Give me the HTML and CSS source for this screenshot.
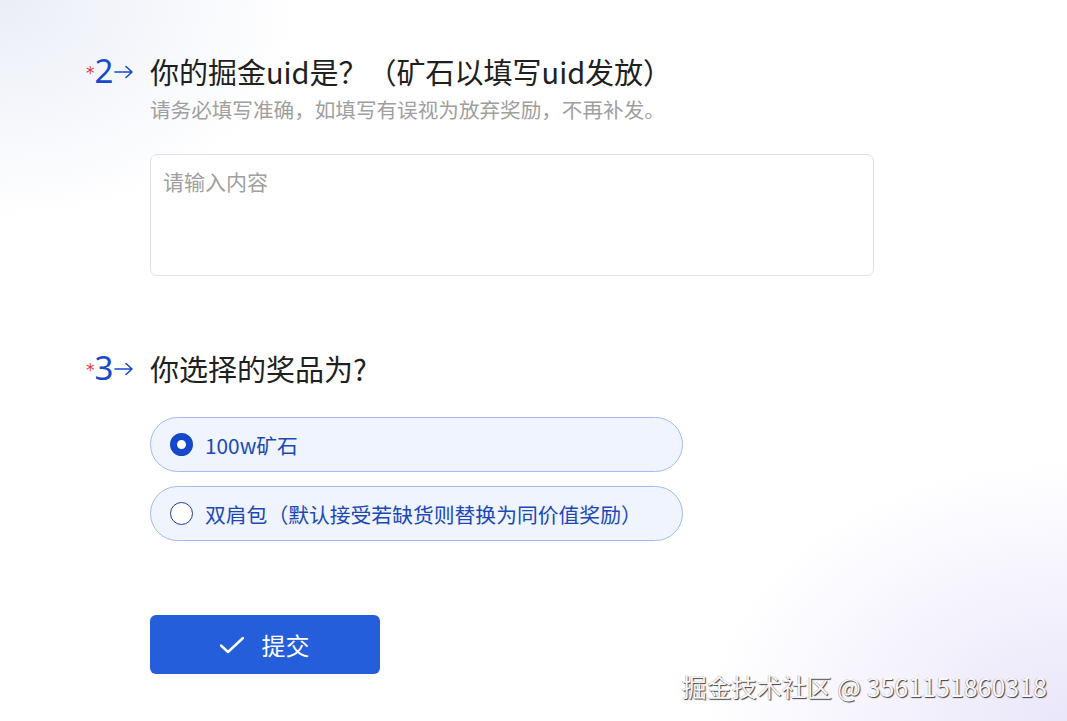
FILE: index.html
```html
<!DOCTYPE html>
<html>
    <head>
        <meta charset="utf-8">
        <title>问卷</title>
        <link rel="stylesheet" href="styles.css">
    </head>
    <body>
      <div class="page">

        <div class="question q2">
          <div class="num"><span class="req">*</span><span class="no">2</span><svg class="arrow" width="20" height="14" viewBox="0 0 20 14"><path d="M1 7 H18 M12 1.5 L18 7 L12 12.5" fill="none" stroke="currentColor" stroke-width="1.6" stroke-linecap="round" stroke-linejoin="round"/></svg></div>
          <div class="body">
            <div class="title">你的掘金uid是？（矿石以填写uid发放）</div>
            <div class="desc">请务必填写准确，如填写有误视为放弃奖励，不再补发。</div>
            <textarea class="answer" placeholder="请输入内容"></textarea>
          </div>
        </div>

        <div class="question q3">
          <div class="num"><span class="req">*</span><span class="no">3</span><svg class="arrow" width="20" height="14" viewBox="0 0 20 14"><path d="M1 7 H18 M12 1.5 L18 7 L12 12.5" fill="none" stroke="currentColor" stroke-width="1.6" stroke-linecap="round" stroke-linejoin="round"/></svg></div>
          <div class="body">
            <div class="title">你选择的奖品为?</div>
            <div class="options">
              <label class="option checked"><span class="radio"></span>100w矿石</label>
              <label class="option"><span class="radio"></span>双肩包（默认接受若缺货则替换为同价值奖励）</label>
            </div>
            <button class="btn">
              <svg width="26" height="20" viewBox="0 0 26 20"><path d="M2 10.5 L9 17 L24 3" fill="none" stroke="white" stroke-width="2.4" stroke-linecap="round" stroke-linejoin="round"/></svg>
              <span>提交</span>
            </button>
          </div>
        </div>

      </div>
      <div class="watermark">掘金技术社区 @ 3561151860318</div>
    </body>
</html>
```

FILE: styles.css
```css
  html, body {
      height: 100%;
  }

  body {
      margin: 0;
      font-family: "Noto Sans CJK SC", "Noto Sans", sans-serif;
      background-color: white;
      background-image:
        radial-gradient(ellipse 300px 220px at 0 0, rgba(232, 236, 246, 0.9), rgba(255, 255, 255, 0)),
        radial-gradient(ellipse 360px 260px at 100% 100%, rgba(234, 230, 250, 1), rgba(255, 255, 255, 0));
      overflow: hidden;
  }

  .page {
      padding-top: 53px;
      padding-left: 86px;
  }

  .question {
      display: flex;
  }

  .q3 {
      margin-top: 74px;
  }

  .num {
      width: 64px;
      height: 36px;
      display: flex;
      align-items: center;
      color: rgb(24, 72, 204);
  }

  .req {
      color: rgb(232, 56, 56);
      font-family: "DejaVu Sans", sans-serif;
      font-size: 17px;
      line-height: 20px;
      position: relative;
      top: 2px;
  }

  .no {
      font-size: 33px;
      line-height: 36px;
      font-family: "Noto Sans", sans-serif;
      letter-spacing: -1px;
  }

  .arrow {
      margin-left: 2px;
      position: relative;
      top: 1px;
  }

  .title {
      font-size: 29px;
      line-height: 36px;
      color: rgb(32, 32, 32);
  }

  .desc {
      font-size: 20.6px;
      line-height: 28px;
      color: rgb(160, 160, 160);
      margin-top: 6px;
  }

  .answer {
      display: block;
      box-sizing: border-box;
      width: 724px;
      height: 122px;
      margin-top: 31px;
      padding: 12px 12px;
      border: 1px solid rgb(226, 226, 226);
      border-radius: 7px;
      font-family: inherit;
      font-size: 21px;
      line-height: 28px;
      resize: none;
      outline: none;
  }

  .answer::placeholder {
      color: rgb(160, 160, 160);
  }

  .options {
      margin-top: 31px;
      display: flex;
      flex-direction: column;
      gap: 14px;
      width: 533px;
  }

  .option {
      display: flex;
      align-items: center;
      box-sizing: border-box;
      height: 55px;
      padding-left: 19px;
      border: 1px solid rgb(164, 187, 238);
      border-radius: 28px;
      background-color: rgb(239, 244, 254);
      color: rgb(28, 72, 184);
      font-size: 20.8px;
  }

  .radio {
      box-sizing: border-box;
      width: 23px;
      height: 23px;
      border-radius: 50%;
      border: 1.5px solid rgb(28, 60, 160);
      background-color: white;
      margin-right: 12px;
  }

  .option.checked .radio {
      border: 7px solid rgb(22, 72, 204);
  }

  .btn {
      margin-top: 74px;
      width: 230px;
      height: 59px;
      border: none;
      border-radius: 6px;
      background-color: rgb(36, 94, 218);
      color: white;
      font-family: inherit;
      font-size: 24px;
      display: flex;
      align-items: center;
      justify-content: center;
      gap: 17px;
      cursor: pointer;
  }

  .btn svg {
      margin-left: -2px;
  }

  .watermark {
      position: absolute;
      right: 20px;
      bottom: 20px;
      font-size: 25px;
      line-height: 30px;
      color: rgb(248, 248, 248);
      text-shadow: 1px 1px 1px rgba(0, 0, 0, 0.75), -0.5px -0.5px 0 rgba(0, 0, 0, 0.35);
  }
```
